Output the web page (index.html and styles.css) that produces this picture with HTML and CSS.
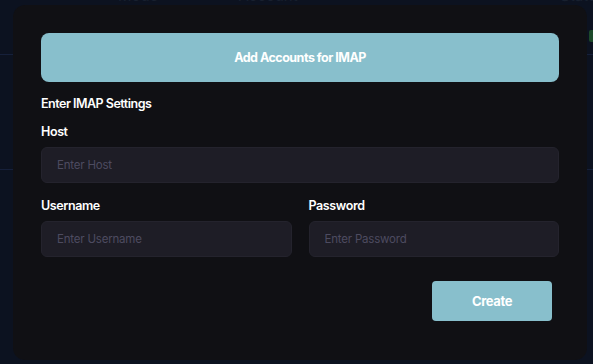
FILE: index.html
```html
<!DOCTYPE html>
<html>
<head>
    <title>Add IMAP Accounts</title>
    <meta charset="utf-8">
    <link rel="stylesheet" href="styles.css">
</head>
<body>

<div class="page">
    <div class="table-head">
        <span class="col col-mode">Mode</span>
        <span class="col col-account">Account</span>
        <span class="col col-status">Status</span>
    </div>
    <div class="table-row"><span class="status-pill"></span></div>
    <div class="table-row table-row-last"></div>
</div>

<div class="modal">
    <div class="modal-banner">Add Accounts for IMAP</div>
    <div class="section-title">Enter IMAP Settings</div>

    <div class="field">
        <label class="field-label">Host</label>
        <input class="field-input" type="text" placeholder="Enter Host">
    </div>

    <div class="field-row">
        <div class="field">
            <label class="field-label">Username</label>
            <input class="field-input" type="text" placeholder="Enter Username">
        </div>
        <div class="field">
            <label class="field-label">Password</label>
            <input class="field-input" type="password" placeholder="Enter Password">
        </div>
    </div>

    <div class="modal-actions">
        <button class="btn-create" type="button">Create</button>
    </div>
</div>

</body>
</html>
```

FILE: styles.css
```css
html, body {
    margin: 0;
    padding: 0;
}
body {
    background: #0c1220;
    font-family: Inter, "Noto Sans", sans-serif;
    width: 593px;
    height: 364px;
    overflow: hidden;
    position: relative;
}

/* page behind the modal */
.page {
    color: #18202f;
}
.table-head {
    display: flex;
    height: 68px;
    margin-top: -14px;
    font-size: 15px;
    line-height: 20px;
    border-bottom: 1px solid #16203a;
}
.col-mode { margin-left: 118px; }
.col-account { margin-left: 80px; }
.col-status { margin-left: auto; margin-right: -12px; }
.table-row {
    height: 114px;
    border-bottom: 1px solid #16203a;
    position: relative;
}
.table-row-last {
    border-bottom: none;
}
.status-pill {
    position: absolute;
    right: -4px;
    top: -25px;
    width: 8px;
    height: 12px;
    background: #1d4a2a;
    border-radius: 2px;
}

/* modal */
.modal {
    position: absolute;
    left: 13px;
    top: 5px;
    width: 574px;
    height: 355px;
    box-sizing: border-box;
    padding: 28px 28px 0;
    background: #101014;
    border-radius: 12px;
    display: flex;
    flex-direction: column;
}
.modal-banner {
    height: 49px;
    border-radius: 8px;
    background: #88bfcc;
    color: #fff;
    font-size: 12.5px;
    font-weight: 700;
    letter-spacing: -0.5px;
    display: flex;
    align-items: center;
    justify-content: center;
}
.section-title {
    margin-top: 14px;
    color: #fff;
    font-size: 12.5px;
    font-weight: 600;
    letter-spacing: -0.5px;
}
.field {
    display: flex;
    flex-direction: column;
}
.field-row .field {
    flex: 1;
}
.field-label {
    margin-top: 13px;
    margin-bottom: 8px;
    color: #fff;
    font-size: 12.5px;
    font-weight: 600;
    letter-spacing: -0.4px;
}
.field-input {
    height: 36px;
    box-sizing: border-box;
    padding: 0 15px;
    background: #1e1d26;
    border: 1px solid #24232d;
    border-radius: 6px;
    color: #fff;
    font-family: Inter, "Noto Sans", sans-serif;
    font-size: 11.5px;
    letter-spacing: -0.2px;
    outline: none;
}
.field-input::placeholder {
    color: #4d4b60;
}
.field-row {
    display: flex;
    gap: 17px;
    margin-top: 2px;
}
.modal-actions {
    display: flex;
    justify-content: flex-end;
    margin-top: 24px;
    padding-right: 7px;
}
.btn-create {
    width: 120px;
    height: 40px;
    border: none;
    border-radius: 4px;
    background: #88bfcc;
    color: #fff;
    font-family: Inter, "Noto Sans", sans-serif;
    font-size: 13px;
    font-weight: 700;
    letter-spacing: -0.4px;
}
```
